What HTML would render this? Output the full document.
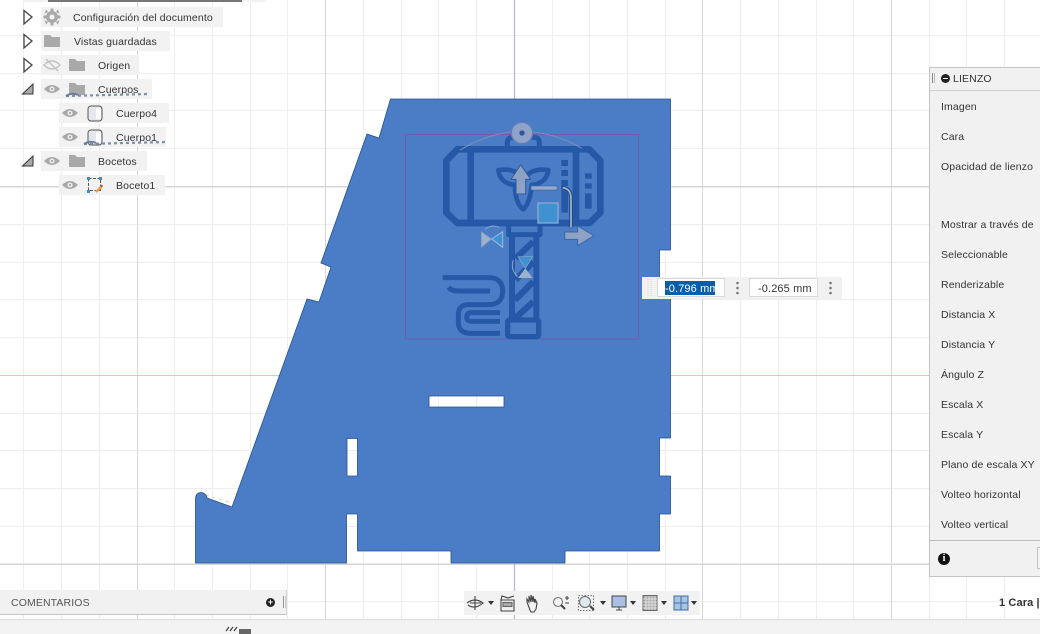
<!DOCTYPE html>
<html><head><meta charset="utf-8"><style>
html,body{margin:0;padding:0;background:#fff}
#r{position:relative;width:1040px;height:634px;overflow:hidden;background:#fff;font-family:"Liberation Sans",sans-serif;font-size:10.5px;color:#333}
svg{position:absolute;left:0;top:0}
.c{position:absolute;height:20px;background:#f2f2f2}
.t{position:absolute;line-height:14px;white-space:nowrap;letter-spacing:.12px;margin-top:1px}
.p{left:941px}
</style></head><body><div id="r">
<svg width="1040" height="634" viewBox="0 0 1040 634">
<g stroke="#eeeeee" stroke-width="1" shape-rendering="crispEdges">
<path d="M23.5 0V619M61.5 0V619M99.5 0V619M174.5 0V619M212.5 0V619M250.5 0V619M287.5 0V619M363.5 0V619M401.5 0V619M438.5 0V619M476.5 0V619M552.5 0V619M589.5 0V619M627.5 0V619M665.5 0V619M740.5 0V619M778.5 0V619M816.5 0V619M853.5 0V619M929.5 0V619M966.5 0V619M1004.5 0V619"/>
<path d="M0 35.5H1040M0 73.5H1040M0 110.5H1040M0 148.5H1040M0 224.5H1040M0 262.5H1040M0 299.5H1040M0 337.5H1040M0 413.5H1040M0 450.5H1040M0 488.5H1040M0 526.5H1040M0 601.5H1040"/>
</g>
<g stroke="#d6d6d6" stroke-width="1" shape-rendering="crispEdges">
<path d="M137.5 0V619M325.5 0V619M702.5 0V619M891.5 0V619"/>
<path d="M0 186.5H1040M0 564H1040" stroke-width="1.5"/>
</g>
<path d="M514.5 0V619" stroke="#b5b5dc" stroke-width="1.2"/>
<path d="M0 375.5H1040" stroke="#a2e8a2" stroke-width="1" shape-rendering="crispEdges"/>
<path d="M205 495L232 503" stroke="#e8d2c0" stroke-width="1" stroke-dasharray="4 3"/>
<path fill="#4b7cc6" stroke="#24508f" stroke-width=".8" fill-rule="evenodd" d="M390.5 99H670.5V250H659.5V288H670.5V438H659.5V476H670.5V514H659.5V551H565V563H451V551H357.500V514H346.500V563H195.500V499C195.500 490 206 491 207 498L232 507L307 299L319 302L331 267L321 263L367 134L379 138ZM429 396V407H504V396ZM347 438.500V476H357.500V438.500Z"/>
<rect x="405.500" y="134.500" width="233" height="204.500" fill="none" stroke="#6c5fa8" stroke-width="1"/>
<g transform="translate(400 90) scale(.33333)">
<g fill="none" stroke="#2559a8" stroke-linejoin="round">
<path d="M172 178H568L601 212V368L568 399H172L139 368V212Z" stroke-width="20"/>
<path d="M212 178V399M528 178V399" stroke-width="20"/>
<path d="M322 172V158Q322 142 340 142H400Q418 142 418 158V172" stroke-width="15"/>
<path d="M326 399V434H420V399" stroke-width="15"/>
<path d="M336 434V690M409 434V690" stroke-width="18"/>
<path d="M347 505L400 455M347 570L400 515M345 630L400 575M345 685L400 635" stroke-width="19"/>
<rect x="323" y="690" width="93" height="50" rx="6" stroke-width="16"/>
<path d="M128 563H265Q308 563 308 603Q308 644 265 644H205Q175 644 175 675V695Q175 730 210 730H300" stroke-width="15"/>
<path d="M145 592Q155 603 175 603H270" stroke-width="15"/>
<path d="M300 668H215Q200 668 200 682Q200 694 215 694H300" stroke-width="15"/>
<path d="M295 240Q350 232 370 270Q392 232 445 240Q440 280 395 285Q390 340 370 358Q345 340 345 285Q300 280 295 240Z" stroke-width="14"/>
</g>
<g fill="#2559a8">
<rect x="484" y="210" width="20" height="18"/><rect x="484" y="240" width="20" height="18"/><rect x="484" y="270" width="20" height="18"/><rect x="484" y="300" width="20" height="68"/>
<rect x="555" y="250" width="20" height="16"/><rect x="555" y="280" width="20" height="16"/><rect x="555" y="310" width="20" height="46"/>
</g>
<path d="M180 180Q280 122 366 125Q460 125 545 175" fill="none" stroke="#7d8fb8" stroke-width="3"/>
<circle cx="366" cy="129" r="32" fill="#8fa3c8" stroke="#5d7fb8" stroke-width="4"/>
<circle cx="366" cy="129" r="8" fill="#2f5596"/>
<path d="M362 224L392 268H377V312H348V268H333Z" fill="#8ea2c4" stroke="#2f5a9e" stroke-width="3"/>
<rect x="393" y="288" width="78" height="12" fill="#98abca" stroke="#3b66aa" stroke-width="2"/>
<path d="M484 293Q513 293 513 325V412" fill="none" stroke="#21497f" stroke-width="11"/>
<path d="M488 293Q513 296 513 325V412" fill="none" stroke="#a5b5d0" stroke-width="5"/>
<path d="M494 426H533V408L582 437L533 467V448H494Z" fill="#8ea2c4" stroke="#3b66aa" stroke-width="3"/>
<rect x="414" y="339" width="60" height="60" fill="#3f92d2" stroke="#8ea8cc" stroke-width="4"/>
<path d="M244 425L275 447L244 472Z" fill="#9db0cc" stroke="#7e97c0" stroke-width="2"/>
<path d="M308 425L275 447L308 472Z" fill="#3f92d2" stroke="#a5b8d2" stroke-width="3"/>
<path d="M255 418Q275 402 298 412" fill="none" stroke="#93a7c8" stroke-width="3"/>
<path d="M354 500H398L376 535Z" fill="#3f92d2" stroke="#8ea8cc" stroke-width="2"/>
<path d="M354 564H398L376 535Z" fill="#9db0cc"/>
<path d="M340 510Q330 535 352 560" fill="none" stroke="#9db0cc" stroke-width="2.500"/>
</g>
<rect x="642" y="277" width="200" height="22" fill="#f1f1f1"/>
</svg>

<div class="c" style="left:24px;top:-18px;width:242px"></div>
<div style="position:absolute;left:48px;top:0;width:194px;height:1.500px;background:#777"></div>
<div class="c" style="left:41px;top:7px;width:182px"></div>
<div class="c" style="left:41px;top:31px;width:129px"></div>
<div class="c" style="left:41px;top:55px;width:98px"></div>
<div class="c" style="left:41px;top:79px;width:111px"></div>
<div class="c" style="left:59px;top:103px;width:110px"></div>
<div class="c" style="left:59px;top:127px;width:107px"></div>
<div class="c" style="left:41px;top:151px;width:106px"></div>
<div class="c" style="left:59px;top:175px;width:106px"></div>

<div class="t" style="left:73px;top:10px">Configuración del documento</div>
<div class="t" style="left:74px;top:34px">Vistas guardadas</div>
<div class="t" style="left:98px;top:58px">Origen</div>
<div class="t" style="left:98px;top:82px">Cuerpos</div>
<div class="t" style="left:116px;top:106px">Cuerpo4</div>
<div class="t" style="left:116px;top:130px">Cuerpo1</div>
<div class="t" style="left:98px;top:154px">Bocetos</div>
<div class="t" style="left:116px;top:178px">Boceto1</div>

<svg width="300" height="200" viewBox="0 0 300 200" style="z-index:2">
<g fill="#fff" stroke="#444" stroke-width="1.300">
<path d="M24 10.500L32 17L24 24Z"/><path d="M24 34.500L32 41L24 48Z"/><path d="M24 58.500L32 65L24 72Z"/>
</g>
<path d="M22.500 94H33V84Z" fill="#aaa" stroke="#333"/><path d="M22.500 166H33V156Z" fill="#aaa" stroke="#333"/>
<g fill="#a9a9a9">
<circle cx="52" cy="17" r="6"/>
<path d="M50.500 8.500H53.500V25.500H50.500ZM43.500 15.500H60.500V18.500H43.500ZM46 9.500L48.200 12L44.500 13.800ZM58 9.500L55.800 12L59.500 13.800ZM46 24.500L48.200 22L44.500 20.200ZM58 24.500L55.800 22L59.500 20.200Z"/>
<path d="M44 35H50L52 37H60V47H44Z"/>
<path d="M69 59H75L77 61H85V71H69Z"/>
<path d="M69 83H75L77 85H85V95H69Z"/>
<path d="M69 155H75L77 157H85V167H69Z"/>
</g>
<circle cx="52" cy="17" r="2.500" fill="#f2f2f2"/>
<g fill="none" stroke="#a5a5a5" stroke-width="1.300">
<path d="M44 65Q52 57 60 65Q52 73 44 65Z" stroke="#c2c2c2"/><path d="M46 59L58 71" stroke="#c2c2c2"/>
</g>
<g fill="#a9a9a9">
<path d="M44 89Q52 81 60 89Q52 97 44 89Z"/><path d="M62 113Q70 105 78 113Q70 121 62 113Z"/><path d="M62 137Q70 129 78 137Q70 145 62 137Z"/><path d="M44 161Q52 153 60 161Q52 169 44 161Z"/><path d="M62 185Q70 177 78 185Q70 193 62 185Z"/>
</g>
<g fill="#f2f2f2"><circle cx="52" cy="89" r="2.500"/><circle cx="70" cy="113" r="2.500"/><circle cx="70" cy="137" r="2.500"/><circle cx="52" cy="161" r="2.500"/><circle cx="70" cy="185" r="2.500"/></g>
<g fill="#a9a9a9"><circle cx="52" cy="89" r="1.200"/><circle cx="70" cy="113" r="1.200"/><circle cx="70" cy="137" r="1.200"/><circle cx="52" cy="161" r="1.200"/><circle cx="70" cy="185" r="1.200"/></g>
<rect x="88" y="106" width="14" height="15" rx="3" fill="#e4e8ee" stroke="#555"/>
<rect x="88" y="130" width="14" height="15" rx="3" fill="#e4e8ee" stroke="#555"/>
<path d="M96 108H101V119H96Z" fill="#fbfbfb"/><path d="M96 132H101V143H96Z" fill="#fbfbfb"/>
<rect x="88.500" y="178.500" width="12" height="12" fill="none" stroke="#555" stroke-dasharray="3 1.500"/>
<g fill="#3b8fc8"><rect x="87" y="177" width="3" height="3"/><rect x="99" y="177" width="3" height="3"/><rect x="87" y="190" width="3" height="3"/></g>
<path d="M96 192L102 186" stroke="#e8a04c" stroke-width="2.500"/><circle cx="101.500" cy="186" r="1.200" fill="#d24c3c"/>
<g fill="none" stroke="#7f8fa6" stroke-width="2.200" stroke-dasharray="3 3">
<path d="M66 96L148 94"/><path d="M84 144L166 142"/>
</g>
<path d="M66 96Q72 92 78 95" fill="none" stroke="#6b7f9c" stroke-width="2"/><path d="M84 144Q90 140 96 143" fill="none" stroke="#6b7f9c" stroke-width="2"/>
</svg>

<!-- dialog -->
<div style="position:absolute;left:657px;top:278px;width:68px;height:19px;background:#fff;border:1px solid #d8d8d8;box-sizing:border-box"></div>
<div style="position:absolute;left:665px;top:281px;width:50px;height:14px;background:#0a5ea8"></div>
<div class="t" style="left:665px;top:281px;color:#fff;font-size:11px;width:50px;overflow:hidden">-0.796 mm</div>
<div style="position:absolute;left:749px;top:278px;width:69px;height:19px;background:#fff;border:1px solid #d8d8d8;box-sizing:border-box"></div>
<div class="t" style="left:758px;top:281px;font-size:11px">-0.265 mm</div>
<svg width="1040" height="634" viewBox="0 0 1040 634" style="z-index:2;pointer-events:none">
<g fill="#777"><circle cx="737.500" cy="283" r="1.300"/><circle cx="737.500" cy="288" r="1.300"/><circle cx="737.500" cy="293" r="1.300"/><circle cx="830.500" cy="283" r="1.300"/><circle cx="830.500" cy="288" r="1.300"/><circle cx="830.500" cy="293" r="1.300"/></g>
<path d="M648 279V296M651 279V296" stroke="#dcdcdc" stroke-dasharray="1 1"/>
</svg>

<!-- right panel -->
<div style="position:absolute;left:929px;top:67px;width:120px;height:510px;background:#f1f1f1;border:1px solid #c4c4c4;box-sizing:border-box"></div>
<div style="position:absolute;left:930px;top:90px;width:110px;height:1px;background:#cfcfcf"></div>
<div style="position:absolute;left:930px;top:540px;width:110px;height:1px;background:#bdbdbd"></div>
<div style="position:absolute;left:1037px;top:547px;width:6px;height:22px;background:#f4f4f4;border:1px solid #c4c4c4;box-sizing:border-box"></div>
<div style="position:absolute;left:932px;top:73px;width:1px;height:10px;background:#888"></div>
<div style="position:absolute;left:934px;top:73px;width:1px;height:10px;background:#bbb"></div>
<div style="position:absolute;left:941px;top:74px;width:9px;height:9px;border-radius:50%;background:#222"></div>
<div style="position:absolute;left:943px;top:78px;width:5px;height:1px;background:#fff"></div>
<div class="t" style="left:953px;top:71px">LIENZO</div>
<div class="t p" style="top:99px">Imagen</div>
<div class="t p" style="top:129px">Cara</div>
<div class="t p" style="top:159px">Opacidad de lienzo</div>
<div class="t p" style="top:217px">Mostrar a través de</div>
<div class="t p" style="top:247px">Seleccionable</div>
<div class="t p" style="top:277px">Renderizable</div>
<div class="t p" style="top:307px">Distancia X</div>
<div class="t p" style="top:337px">Distancia Y</div>
<div class="t p" style="top:367px">Ángulo Z</div>
<div class="t p" style="top:397px">Escala X</div>
<div class="t p" style="top:427px">Escala Y</div>
<div class="t p" style="top:457px">Plano de escala XY</div>
<div class="t p" style="top:487px">Volteo horizontal</div>
<div class="t p" style="top:517px">Volteo vertical</div>
<div style="position:absolute;left:938px;top:553px;width:12px;height:12px;border-radius:50%;background:#111;color:#fff;font:bold 10px/12px 'Liberation Serif',serif;text-align:center">i</div>

<!-- bottom -->
<div style="position:absolute;left:0;top:590px;width:287px;height:25px;background:#f1f1f1;border-bottom:1px solid #c4c4c4;border-right:1px solid #d5d5d5;box-sizing:border-box"></div>
<div class="t" style="left:11px;top:595px;color:#555">COMENTARIOS</div>
<div style="position:absolute;left:266px;top:598px;width:9px;height:9px;border-radius:50%;background:#222;color:#fff;font:bold 9px/9px 'Liberation Sans',sans-serif;text-align:center">+</div>
<div style="position:absolute;left:283px;top:596px;width:1px;height:12px;background:#999"></div>
<div style="position:absolute;left:285px;top:596px;width:1px;height:12px;background:#ccc"></div>
<div style="position:absolute;left:464px;top:591px;width:236px;height:24px;background:#f2f2f2"></div>
<div style="position:absolute;left:0;top:619px;width:1040px;height:15px;background:#f3f3f3;border-top:1px solid #dcdcdc;box-sizing:border-box"></div>
<div class="t" style="left:999px;top:595px;font-weight:bold;font-size:11px">1 Cara |</div>
<svg width="1040" height="634" viewBox="0 0 1040 634" style="z-index:3">
<g fill="none" stroke="#444" stroke-width="1.100">
<path d="M475 596V610M470 603H481M467 603Q475 597 483 603Q475 610 468 605"/>
<path d="M501 600H514V611H501ZM501 600L502 596L508 598L514 596"/>
<rect x="503" y="602.500" width="9" height="4" fill="#aaa" stroke="#666"/>
<path d="M530 610L527 602V599L529 602V596L531 602V595L533 602V596L535 603V599L537 603L536 609L534 612H531Z"/>
<circle cx="558" cy="602" r="4.500" stroke="#777"/><path d="M561 605L565 609" stroke-width="2"/>
<path d="M565 598H569M567 596V600M565 603H569"/>
<rect x="578.500" y="595.500" width="15" height="15" stroke="#777" stroke-dasharray="1.500 1.500"/>
<path d="M590 606L594 610" stroke-width="2"/>
</g>
<circle cx="585" cy="602" r="5.500" fill="#dfe8ee" stroke="#666"/>
<rect x="612" y="596" width="14" height="11" fill="#a9c0e2" stroke="#444"/><path d="M616 610H622M619 607V610" stroke="#444"/>
<rect x="643" y="595.500" width="14" height="15" fill="#aaa" stroke="#666"/>
<path d="M646 596V610M649 596V610M652 596V610M655 596V610M643 599H657M643 602H657M643 605H657M643 608H657" stroke="#eee" stroke-width=".7"/>
<rect x="674" y="596" width="14" height="14" fill="#a8c4e4" stroke="#3e6ea8"/><path d="M681 596V610M674 603H688" stroke="#3e6ea8"/>
<g fill="#333"><path d="M488 601H494L491 605Z"/><path d="M600 601H606L603 605Z"/><path d="M630 601H636L633 605Z"/><path d="M661 601H667L664 605Z"/><path d="M691 601H697L694 605Z"/></g>
<path d="M226 631L229 627M230 631L233 627M234 631L237 627" stroke="#444" stroke-width="1.300"/>
<rect x="239" y="629" width="12" height="5" fill="#666"/>
</svg>
</div></body></html>
